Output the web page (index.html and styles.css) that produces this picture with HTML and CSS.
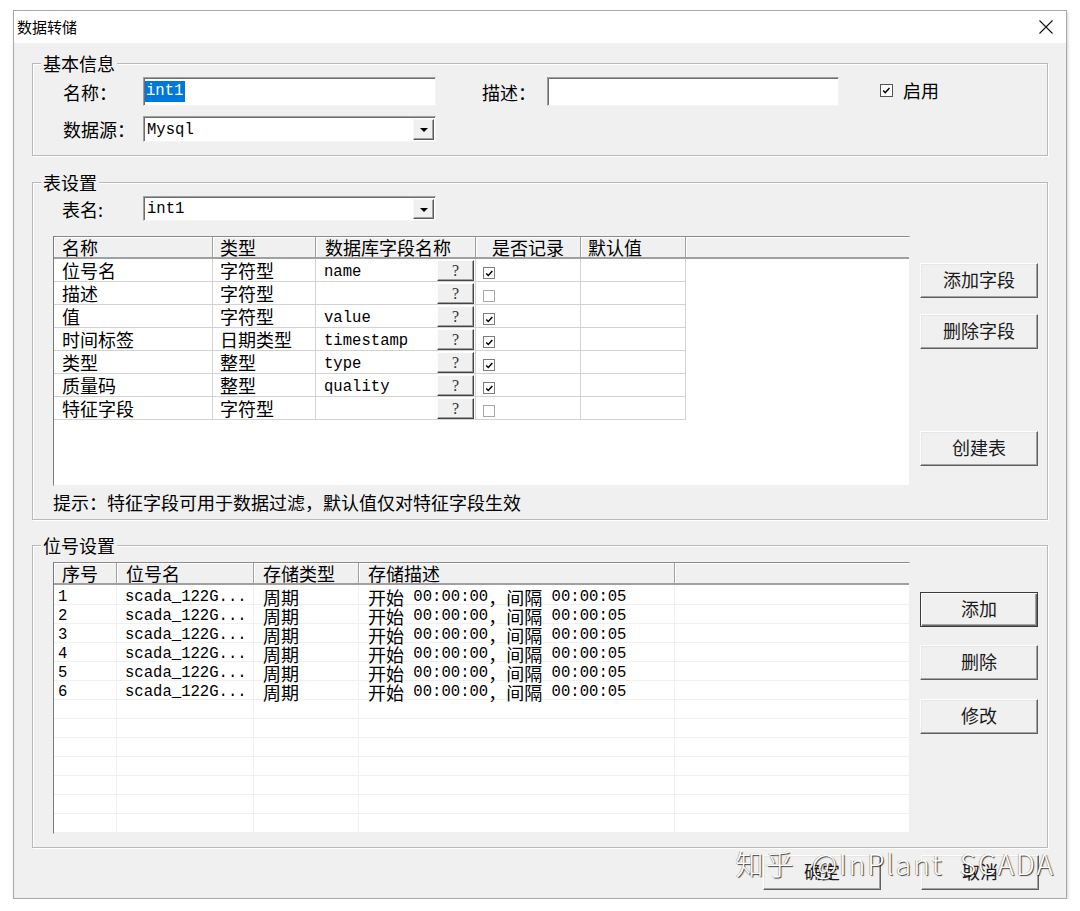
FILE: index.html
```html
<!DOCTYPE html>
<html lang="zh-CN">
<head>
<meta charset="utf-8">
<title>数据转储</title>
<link rel="stylesheet" href="styles.css">
</head>
<body>
<div class="window">
  <div class="titlebar">
    <span class="title">数据转储</span>
    <svg class="close" width="16" height="16" viewBox="0 0 16 16"><path d="M1.5 1.5 L14.5 14.5 M14.5 1.5 L1.5 14.5" stroke="#111" stroke-width="1.1" fill="none"/></svg>
  </div>
  <div class="client">
    <section class="group g-basic">
      <div class="legend">基本信息</div>
      <div class="form-row r1">
        <span class="lbl lbl-name">名称：</span>
        <div class="edit edit-name"><span class="sel mono">int1</span></div>
        <span class="lbl lbl-desc">描述：</span>
        <div class="edit edit-desc"></div>
        <div class="enable">
          <span class="chk chk-lg"><svg viewBox="0 0 13 13" width="11" height="11"><path d="M2.5 6.5 L5 9 L10 3.5" stroke="#000" stroke-width="1.7" fill="none"/></svg></span>
          <span class="enable-text">启用</span>
        </div>
      </div>
      <div class="form-row r2">
        <span class="lbl lbl-name">数据源：</span>
        <div class="combo"><span class="mono combo-text">Mysql</span><span class="drop"><span class="tri"></span></span></div>
      </div>
    </section>

    <section class="group g-table">
      <div class="legend">表设置</div>
      <div class="form-row r-tname">
        <span class="lbl lbl-tname">表名:</span>
        <div class="combo"><span class="mono combo-text">int1</span><span class="drop"><span class="tri"></span></span></div>
      </div>
      <div class="split">
        <div class="left-col">
          <div class="ftable">
            <div class="fhead">
              <div class="hc">名称</div>
              <div class="hc">类型</div>
              <div class="hc hc-db">数据库字段名称</div>
              <div class="hc hc-center">是否记录</div>
              <div class="hc">默认值</div>
              <div class="hc hc-fill"></div>
            </div>
            <div class="frow">
              <div class="fc">位号名</div><div class="fc">字符型</div>
              <div class="fc fc-db"><span class="mono">name</span><span class="qbtn">?</span></div>
              <div class="fc fc-chk"><span class="chk chk-sm on"><svg viewBox="0 0 11 11" width="9" height="9"><path d="M1.5 5.5 L4 8 L9 2.5" stroke="#000" stroke-width="1.8" fill="none"/></svg></span></div>
              <div class="fc"></div><div class="fc fc-fill"></div>
            </div>
            <div class="frow">
              <div class="fc">描述</div><div class="fc">字符型</div>
              <div class="fc fc-db"><span class="mono"></span><span class="qbtn">?</span></div>
              <div class="fc fc-chk"><span class="chk chk-sm"></span></div>
              <div class="fc"></div><div class="fc fc-fill"></div>
            </div>
            <div class="frow">
              <div class="fc">值</div><div class="fc">字符型</div>
              <div class="fc fc-db"><span class="mono">value</span><span class="qbtn">?</span></div>
              <div class="fc fc-chk"><span class="chk chk-sm on"><svg viewBox="0 0 11 11" width="9" height="9"><path d="M1.5 5.5 L4 8 L9 2.5" stroke="#000" stroke-width="1.8" fill="none"/></svg></span></div>
              <div class="fc"></div><div class="fc fc-fill"></div>
            </div>
            <div class="frow">
              <div class="fc">时间标签</div><div class="fc">日期类型</div>
              <div class="fc fc-db"><span class="mono">timestamp</span><span class="qbtn">?</span></div>
              <div class="fc fc-chk"><span class="chk chk-sm on"><svg viewBox="0 0 11 11" width="9" height="9"><path d="M1.5 5.5 L4 8 L9 2.5" stroke="#000" stroke-width="1.8" fill="none"/></svg></span></div>
              <div class="fc"></div><div class="fc fc-fill"></div>
            </div>
            <div class="frow">
              <div class="fc">类型</div><div class="fc">整型</div>
              <div class="fc fc-db"><span class="mono">type</span><span class="qbtn">?</span></div>
              <div class="fc fc-chk"><span class="chk chk-sm on"><svg viewBox="0 0 11 11" width="9" height="9"><path d="M1.5 5.5 L4 8 L9 2.5" stroke="#000" stroke-width="1.8" fill="none"/></svg></span></div>
              <div class="fc"></div><div class="fc fc-fill"></div>
            </div>
            <div class="frow">
              <div class="fc">质量码</div><div class="fc">整型</div>
              <div class="fc fc-db"><span class="mono">quality</span><span class="qbtn">?</span></div>
              <div class="fc fc-chk"><span class="chk chk-sm on"><svg viewBox="0 0 11 11" width="9" height="9"><path d="M1.5 5.5 L4 8 L9 2.5" stroke="#000" stroke-width="1.8" fill="none"/></svg></span></div>
              <div class="fc"></div><div class="fc fc-fill"></div>
            </div>
            <div class="frow">
              <div class="fc">特征字段</div><div class="fc">字符型</div>
              <div class="fc fc-db"><span class="mono"></span><span class="qbtn">?</span></div>
              <div class="fc fc-chk"><span class="chk chk-sm"></span></div>
              <div class="fc"></div><div class="fc fc-fill"></div>
            </div>
          </div>
          <div class="hint">提示：特征字段可用于数据过滤，默认值仅对特征字段生效</div>
        </div>
        <div class="btn-col">
          <div class="btn b-addfield">添加字段</div>
          <div class="btn b-delfield">删除字段</div>
          <div class="btn b-create">创建表</div>
        </div>
      </div>
    </section>

    <section class="group g-tags">
      <div class="legend">位号设置</div>
      <div class="split">
        <div class="ltable">
          <div class="lhead">
            <div class="hc">序号</div>
            <div class="hc">位号名</div>
            <div class="hc">存储类型</div>
            <div class="hc">存储描述</div>
            <div class="hc hc-fill"></div>
          </div>
          <div class="lbody">
            <div class="lrow"><div class="lc lc-no"><span class="mono">1</span></div><div class="lc"><span class="mono">scada_122G...</span></div><div class="lc">周期</div><div class="lc">开始<span class="mono"> 00:00:00</span>，间隔<span class="mono"> 00:00:05</span></div><div class="lc"></div></div>
            <div class="lrow"><div class="lc lc-no"><span class="mono">2</span></div><div class="lc"><span class="mono">scada_122G...</span></div><div class="lc">周期</div><div class="lc">开始<span class="mono"> 00:00:00</span>，间隔<span class="mono"> 00:00:05</span></div><div class="lc"></div></div>
            <div class="lrow"><div class="lc lc-no"><span class="mono">3</span></div><div class="lc"><span class="mono">scada_122G...</span></div><div class="lc">周期</div><div class="lc">开始<span class="mono"> 00:00:00</span>，间隔<span class="mono"> 00:00:05</span></div><div class="lc"></div></div>
            <div class="lrow"><div class="lc lc-no"><span class="mono">4</span></div><div class="lc"><span class="mono">scada_122G...</span></div><div class="lc">周期</div><div class="lc">开始<span class="mono"> 00:00:00</span>，间隔<span class="mono"> 00:00:05</span></div><div class="lc"></div></div>
            <div class="lrow"><div class="lc lc-no"><span class="mono">5</span></div><div class="lc"><span class="mono">scada_122G...</span></div><div class="lc">周期</div><div class="lc">开始<span class="mono"> 00:00:00</span>，间隔<span class="mono"> 00:00:05</span></div><div class="lc"></div></div>
            <div class="lrow"><div class="lc lc-no"><span class="mono">6</span></div><div class="lc"><span class="mono">scada_122G...</span></div><div class="lc">周期</div><div class="lc">开始<span class="mono"> 00:00:00</span>，间隔<span class="mono"> 00:00:05</span></div><div class="lc"></div></div>
            <div class="lrow"><div class="lc"></div><div class="lc"></div><div class="lc"></div><div class="lc"></div><div class="lc"></div></div>
            <div class="lrow"><div class="lc"></div><div class="lc"></div><div class="lc"></div><div class="lc"></div><div class="lc"></div></div>
            <div class="lrow"><div class="lc"></div><div class="lc"></div><div class="lc"></div><div class="lc"></div><div class="lc"></div></div>
            <div class="lrow"><div class="lc"></div><div class="lc"></div><div class="lc"></div><div class="lc"></div><div class="lc"></div></div>
            <div class="lrow"><div class="lc"></div><div class="lc"></div><div class="lc"></div><div class="lc"></div><div class="lc"></div></div>
            <div class="lrow"><div class="lc"></div><div class="lc"></div><div class="lc"></div><div class="lc"></div><div class="lc"></div></div>
            <div class="lrow"><div class="lc"></div><div class="lc"></div><div class="lc"></div><div class="lc"></div><div class="lc"></div></div>
          </div>
        </div>
        <div class="btn-col">
          <div class="btn btn-default b-add">添加</div>
          <div class="btn b-del">删除</div>
          <div class="btn b-mod">修改</div>
        </div>
      </div>
    </section>

    <div class="footer">
      <div class="btn">确定</div>
      <div class="btn">取消</div>
    </div>
  </div>
  <div class="watermark">知乎 @InPlant SCADA</div>
</div>
</body>
</html>
```

FILE: styles.css
```css
* { box-sizing: border-box; }

html, body {
  margin: 0;
  padding: 0;
  background: #ffffff;
}

body {
  font-family: "Noto Sans CJK SC", "Noto Sans", sans-serif;
  font-size: 18px;
  color: #000;
}

.mono {
  font-family: "Liberation Mono", "DejaVu Sans Mono", monospace;
  font-size: 15.6px;
}

.window {
  position: relative;
  margin: 10px 0 0 13px;
  width: 1054px;
  height: 889px;
  border: 1px solid #a9a9a9;
  background: #f0f0f0;
  box-shadow: 1px 2px 3px rgba(0, 0, 0, 0.18);
  display: flex;
  flex-direction: column;
}

.titlebar {
  height: 32px;
  background: #ffffff;
  display: flex;
  align-items: center;
  justify-content: space-between;
  padding: 0 12px 0 3px;
}

.title {
  font-size: 15px;
  line-height: 32px;
  color: #000;
}

.close {
  display: block;
}

.client {
  flex: 1;
  padding: 0 18px;
  display: flex;
  flex-direction: column;
}

/* group boxes */
.group {
  border: 1px solid #b9b9b9;
  box-shadow: inset 1px 1px 0 #ffffff, 1px 1px 0 #ffffff;
}

.legend {
  width: fit-content;
  padding: 0 2px;
  height: 20px;
  line-height: 20px;
  background: #f0f0f0;
}

.g-basic {
  margin-top: 20px;
  padding: 0 0 13px 30px;
}

.g-basic .legend { margin: -11px 0 0 -22px; }

.g-table {
  margin-top: 26px;
  padding: 0 9px 7px 20px;
}

.g-tags {
  margin-top: 25px;
  padding: 0 9px 13px 20px;
}

.g-table .legend,
.g-tags .legend { margin: -11px 0 0 -12px; }

/* forms */
.form-row {
  display: flex;
  align-items: center;
}

.r1 { margin-top: 4px; height: 29px; }
.r2 { margin-top: 10px; height: 26px; }
.r-tname { margin-top: 4px; height: 25px; }

.lbl {
  white-space: nowrap;
  line-height: 20px;
}

.lbl-name { width: 80px; }
.lbl-desc { width: 65px; margin-left: 46px; }
.lbl-tname { width: 81px; margin-left: 9px; }

.edit {
  height: 29px;
  background: #ffffff;
  border: 1px solid;
  border-color: #a0a0a0 #f4f4f4 #f4f4f4 #a0a0a0;
  box-shadow: inset 1px 1px 0 #6e6e6e;
  display: flex;
  align-items: center;
  padding-left: 1px;
}

.edit-name { width: 293px; }
.edit-desc { width: 292px; }

.sel {
  background: #0078d7;
  color: #ffffff;
  line-height: 21px;
  padding: 0 2px 0 1px;
}

.enable {
  margin-left: 41px;
  display: flex;
  align-items: center;
  margin-top: -3px;
}

.enable-text {
  margin-left: 10px;
  line-height: 20px;
}

.chk {
  background: #ffffff;
  border: 1px solid #7a7a7a;
  display: flex;
  align-items: center;
  justify-content: center;
}

.chk-lg {
  width: 13px;
  height: 13px;
  border-color: #555;
}

.chk-sm {
  width: 12px;
  height: 12px;
  border-color: #a8a8a8;
}

.chk-sm.on {
  border-color: #7d7d7d;
}

.combo {
  width: 293px;
  height: 100%;
  background: #ffffff;
  border: 1px solid;
  border-color: #a0a0a0 #f4f4f4 #f4f4f4 #a0a0a0;
  box-shadow: inset 1px 1px 0 #6e6e6e;
  display: flex;
  align-items: center;
  justify-content: space-between;
  padding: 2px 1px 1px 2px;
}

.combo-text {
  padding-left: 1px;
}

.drop {
  width: 21px;
  height: 100%;
  background: #f0f0f0;
  border: 1px solid;
  border-color: #f8f8f8 #5a5a5a #5a5a5a #f8f8f8;
  box-shadow: inset -1px -1px 0 #a0a0a0;
  display: flex;
  align-items: center;
  justify-content: center;
}

.tri {
  width: 0;
  height: 0;
  border-left: 4px solid transparent;
  border-right: 4px solid transparent;
  border-top: 4px solid #000;
  margin-top: 1px;
}

/* split layout */
.split {
  display: flex;
  gap: 10px;
}

.g-table .split { margin-top: 15px; }
.g-tags .split { margin-top: 7px; }

.left-col {
  width: 857px;
  display: flex;
  flex-direction: column;
}

.btn-col {
  width: 118px;
  display: flex;
  flex-direction: column;
}

.btn {
  width: 118px;
  height: 35px;
  padding-bottom: 3px;
  background: #f0f0f0;
  border: 1px solid;
  border-color: #fdfdfd #5f5f5f #5f5f5f #fdfdfd;
  box-shadow: inset -1px -1px 0 #a3a3a3, inset 1px 1px 0 #e6e6e6;
  display: flex;
  align-items: center;
  justify-content: center;
  line-height: 20px;
  color: #1a1a1a;
}

.btn-default {
  border: 1px solid #3a3a3a;
  box-shadow: inset 1px 1px 0 #fdfdfd, inset -1px -1px 0 #6a6a6a, inset -2px -2px 0 #a3a3a3;
}

.b-addfield { margin-top: 27px; }
.b-delfield { margin-top: 16px; }
.b-create { margin-top: 82px; }

.b-add { margin-top: 30px; }
.b-del { margin-top: 18px; }
.b-mod { margin-top: 19px; }

/* fields table */
.ftable {
  width: 857px;
  height: 250px;
  background: #ffffff;
  border: 1px solid;
  border-color: #8a8a8a #f0f0f0 #f0f0f0 #7a7a7a;
}

.fhead, .frow {
  display: grid;
  grid-template-columns: 159px 103px 160px 105px 105px 1fr;
}

.fhead, .lhead {
  height: 22px;
}

.hc {
  background: #f0f0f0;
  border-right: 1px solid #a0a0a0;
  border-bottom: 2px solid #a0a0a0;
  box-shadow: inset 1px 1px 0 #ffffff;
  padding-left: 8px;
  line-height: 20px;
  white-space: nowrap;
}

.fhead .hc:nth-child(2) { padding-left: 7px; }
.hc-db { padding-left: 9px; }
.hc-center { text-align: center; padding-left: 0; }
.fhead .hc:nth-child(5) { padding-left: 7px; }
.hc-fill { border-right: none; }

.frow {
  height: 23px;
  grid-template-rows: 23px;
}

.fc {
  border-right: 1px solid #d2d2d2;
  border-bottom: 1px solid #d2d2d2;
  padding-left: 8px;
  display: flex;
  align-items: center;
  line-height: 22px;
  white-space: nowrap;
}

.frow .fc:nth-child(2) { padding-left: 7px; }

.fc-db {
  justify-content: space-between;
  padding-right: 1px;
}

.fc-db .mono {
  line-height: 18px;
  margin-top: 4px;
}

.fc-chk {
  padding-left: 7px;
  padding-top: 6px;
}

.fc-fill {
  border: none;
}

.qbtn {
  width: 37px;
  height: 21px;
  margin-top: 1px;
  background: #f0f0f0;
  border: 1px solid;
  border-color: #fdfdfd #444 #444 #fdfdfd;
  box-shadow: inset -1px -1px 0 #a0a0a0;
  display: flex;
  align-items: center;
  justify-content: center;
  font-family: "Liberation Serif", serif;
  font-size: 16px;
  line-height: 18px;
  color: #333;
}

.hint {
  margin-top: 6px;
  line-height: 20px;
  white-space: nowrap;
}

/* tags list */
.ltable {
  width: 857px;
  height: 272px;
  background: #ffffff;
  border: 1px solid;
  border-color: #8a8a8a #f0f0f0 #f0f0f0 #7a7a7a;
}

.lbody {
  padding-top: 1px;
}

.lhead, .lrow {
  display: grid;
  grid-template-columns: 63px 137px 105px 316px 1fr;
}

.lhead .hc:nth-child(n+2) { padding-left: 9px; }

.lrow {
  height: 19px;
  grid-template-rows: 19px;
}

.lc {
  border-right: 1px solid #f0f0f0;
  border-bottom: 1px solid #f0f0f0;
  padding-left: 8px;
  padding-top: 4px;
  line-height: 14px;
  white-space: nowrap;
  display: flex;
  align-items: center;
}

.lrow .lc:nth-child(n+3) { padding-left: 9px; }
.lc-no { padding-left: 4px; }
.lrow .lc:last-child { border-right: none; }

.lc .mono { white-space: pre; }

/* footer */
.footer {
  margin-top: 7px;
  display: flex;
  justify-content: flex-end;
  gap: 40px;
  padding-right: 9px;
}

/* watermark overlay */
.watermark {
  position: absolute;
  right: 11px;
  bottom: 19px;
  font-family: "Noto Sans CJK SC", "Noto Sans", sans-serif;
  font-size: 28px;
  font-weight: 300;
  letter-spacing: 2px;
  word-spacing: 8px;
  line-height: 32px;
  color: #ffffff;
  text-shadow: 1px 1px 1px rgba(0, 0, 0, 0.75), -1px 0 0 rgba(0, 0, 0, 0.25);
  white-space: nowrap;
  pointer-events: none;
}
```
